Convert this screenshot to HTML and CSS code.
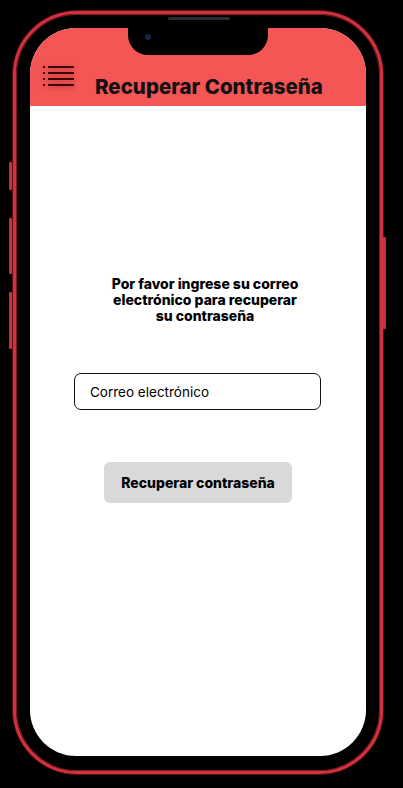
FILE: index.html
```html
<!DOCTYPE html>
<html lang="es">
<head>
<meta charset="utf-8">
<title>Recuperar Contraseña</title>
<link rel="stylesheet" href="styles.css">
</head>
<body>
<div class="phone">
  <span class="side-btn btn-a"></span>
  <span class="side-btn btn-b"></span>
  <span class="side-btn btn-c"></span>
  <span class="side-btn btn-r"></span>
  <span class="speaker"></span>
  <div class="screen">
    <div class="notch"><span class="camera"></span></div>
    <header class="header">
      <svg class="menu" width="31" height="22" viewBox="0 0 31 22">
        <g fill="#3a0505">
          <rect x="0" y="0" width="2" height="2"/>
          <rect x="5" y="0" width="26" height="2"/>
          <rect x="0" y="6" width="2" height="2"/>
          <rect x="5" y="6" width="26" height="2"/>
          <rect x="0" y="12" width="2" height="2"/>
          <rect x="5" y="12" width="26" height="2"/>
          <rect x="0" y="18" width="2" height="2"/>
          <rect x="5" y="18" width="26" height="2"/>
        </g>
      </svg>
      <h1 class="title">Recuperar Contraseña</h1>
    </header>
    <main class="content">
      <p class="intro">Por favor ingrese su correo<br>electrónico para recuperar<br>su contraseña</p>
      <div class="field">Correo electrónico</div>
      <div class="action">Recuperar contraseña</div>
    </main>
  </div>
</div>
</body>
</html>
```
FILE: styles.css
```css
html, body {
  margin: 0;
  padding: 0;
  background: #000;
  width: 403px;
  height: 788px;
  overflow: hidden;
}

.phone {
  position: relative;
  box-sizing: border-box;
  margin: 11px 0 0 13px;
  width: 370px;
  height: 763px;
  border: 3px solid #d2323e;
  border-radius: 64px;
  box-shadow: inset 0 0 0 1px #7a1a22, 0 0 0 1px #5a1018;
  padding: 14px 14px 15px 14px;
  background: #000;
}

.side-btn {
  position: absolute;
  width: 3px;
  background: #c8303b;
  border-radius: 1px;
}
.btn-a { left: -7px; top: 148px; height: 28px; }
.btn-b { left: -7px; top: 204px; height: 56px; }
.btn-c { left: -7px; top: 278px; height: 57px; }
.btn-r { right: -6px; top: 223px; height: 92px; }

.speaker {
  position: absolute;
  left: 152px;
  top: 3px;
  width: 62px;
  height: 3px;
  border-radius: 2px;
  background: #2a2d33;
}

.screen {
  position: relative;
  width: 336px;
  height: 728px;
  background: #fff;
  border-radius: 46px;
  overflow: hidden;
  font-family: Inter, "Liberation Sans", sans-serif;
  color: #000;
}

.notch {
  position: absolute;
  left: 98px;
  top: 0;
  width: 140px;
  height: 27px;
  background: #000;
  border-radius: 0 0 20px 20px;
}
.camera {
  position: absolute;
  left: 17px;
  top: 6px;
  width: 6px;
  height: 6px;
  border-radius: 50%;
  background: #1a2340;
}

.header {
  display: flex;
  align-items: flex-start;
  height: 78px;
  background: #f45555;
  padding: 0 0 0 13px;
  box-sizing: border-box;
}

.menu {
  margin-top: 38px;
  flex: none;
  filter: drop-shadow(0 2px 2px rgba(90, 0, 0, 0.35));
}

.title {
  margin: 47px 0 0 21px;
  font-size: 20.5px;
  line-height: 24px;
  font-weight: 800;
  letter-spacing: 0;
  color: #111;
  white-space: nowrap;
}

.content {
  display: flex;
  flex-direction: column;
}

.intro {
  margin: 170px 0 0 70px;
  width: 210px;
  text-align: center;
  font-size: 14px;
  line-height: 16px;
  font-weight: 800;
}

.field {
  margin: 49px 0 0 44px;
  width: 247px;
  height: 37px;
  box-sizing: border-box;
  border: 1px solid #111;
  border-radius: 7px;
  padding: 1px 0 0 15px;
  display: flex;
  align-items: center;
  font-size: 13.5px;
}

.action {
  margin: 52px 0 0 74px;
  width: 188px;
  height: 41px;
  background: #d9d9d9;
  border-radius: 6px;
  display: flex;
  align-items: center;
  justify-content: center;
  font-size: 14px;
  font-weight: 800;
}
```
